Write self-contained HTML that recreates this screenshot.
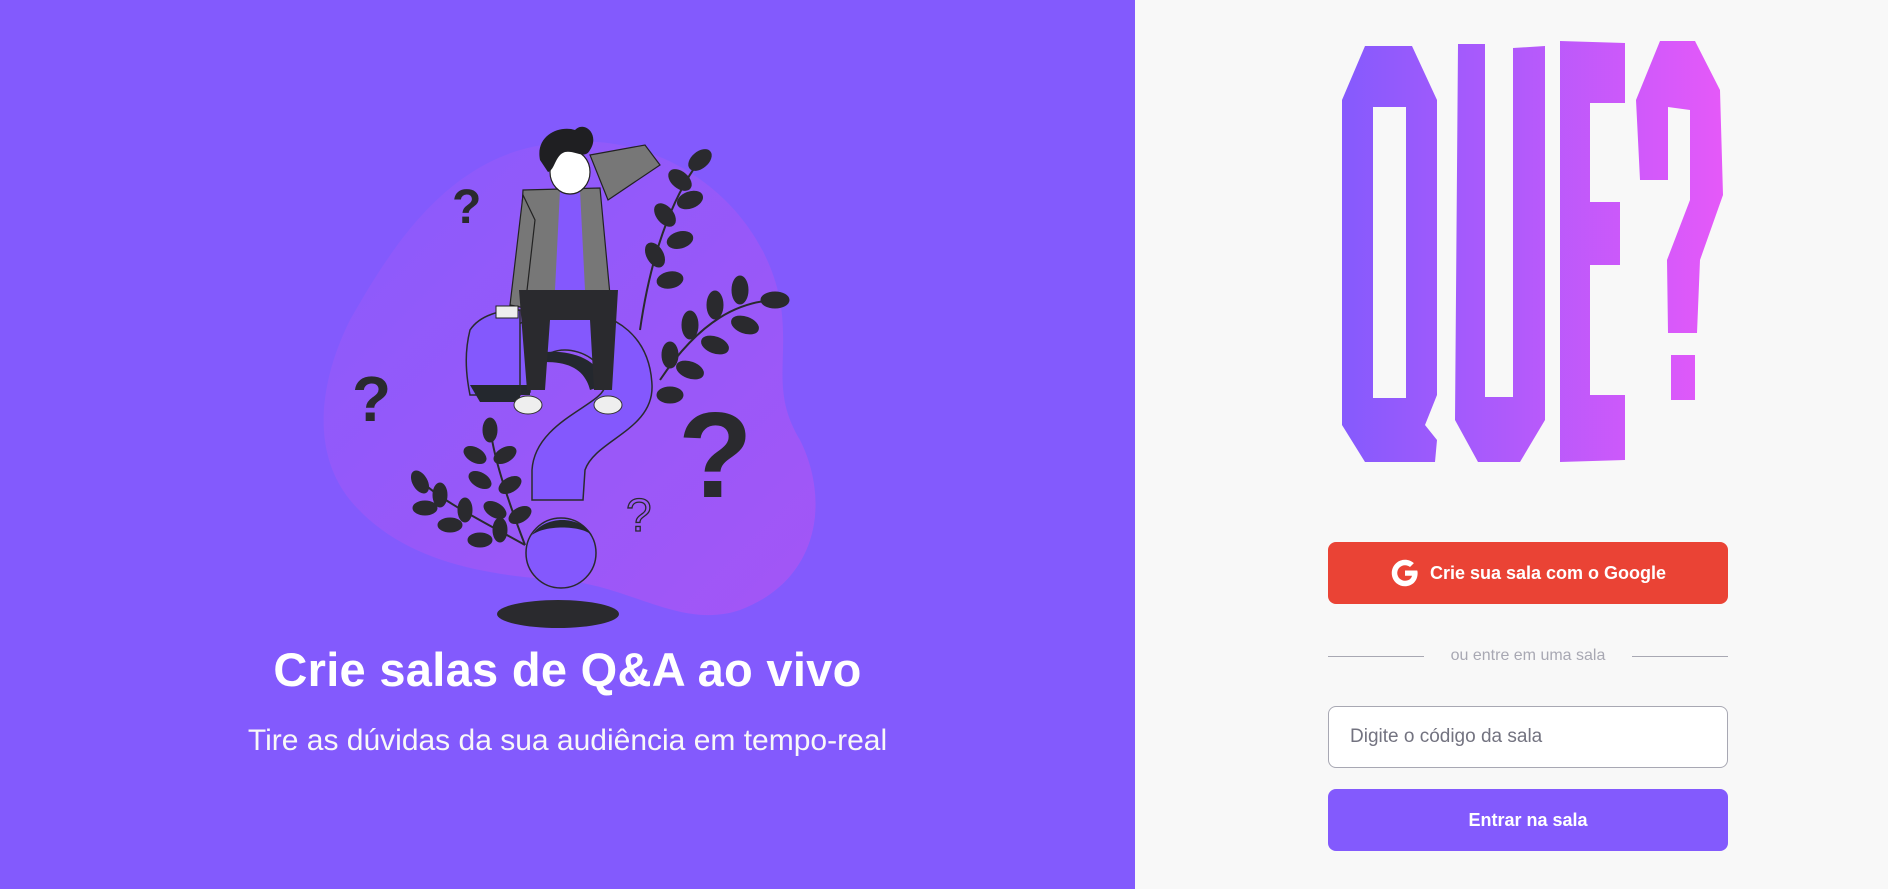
<!DOCTYPE html>
<html><head><meta charset="utf-8"><style>
html,body{margin:0;padding:0;width:1888px;height:889px;overflow:hidden;font-family:"Liberation Sans",sans-serif}
.left{position:absolute;left:0;top:0;width:1135px;height:889px;background:#835afd}
.right{position:absolute;left:1135px;top:0;width:753px;height:889px;background:#f8f8f8}
h1{position:absolute;left:0;width:1135px;top:642px;margin:0;text-align:center;color:#fff;font-size:47px;font-weight:bold;letter-spacing:0.3px}
.sub{position:absolute;left:0;width:1135px;top:752px;text-align:center;color:#f8f8f8;font-size:30px;margin-top:-28px}
.btn{position:absolute;left:1328px;width:400px;height:62px;border-radius:8px;color:#fff;font-weight:bold;font-size:18px;display:flex;align-items:center;justify-content:center}
.g{top:542px;background:#ea4335}
.e{top:789px;background:#835afd}
.div{position:absolute;left:1328px;width:400px;top:646px;height:20px;color:#a8a8b3;font-size:16px;text-align:center;line-height:20px}
.div:before,.div:after{content:"";position:absolute;top:10px;width:96px;height:1px;background:#a8a8b3}
.div:before{left:0}.div:after{right:0}
.inp{position:absolute;left:1328px;top:706px;width:398px;height:60px;border:1px solid #a8a8b3;border-radius:8px;background:#fff;color:#737380;font-size:19px;line-height:60px;padding-left:0;box-sizing:content-box}
.inp span{margin-left:21px}
</style></head><body>
<div class="left">
<svg width="1135" height="640" style="position:absolute;left:0;top:0">
<defs><linearGradient id="bl" x1="0" y1="0" x2="1" y2="1"><stop offset="0" stop-color="#8a5bfc"/><stop offset="1" stop-color="#a356f6"/></linearGradient></defs>
<path d="M560,143 C660,130 760,200 780,300 C790,360 770,390 800,440 C830,500 820,580 740,610 C680,630 630,585 560,580 C480,575 400,560 350,500 C310,450 320,380 350,320 C390,250 450,150 560,143 Z" fill="url(#bl)"/>
<!-- leaves right -->
<g fill="#2a2a2e" stroke="#2a2a2e">
<path d="M640,330 C650,260 670,200 700,160" fill="none" stroke-width="2"/>
<ellipse cx="700" cy="160" rx="13" ry="8" transform="rotate(-40 700 160)"/>
<ellipse cx="680" cy="180" rx="13" ry="8" transform="rotate(-140 680 180)"/>
<ellipse cx="690" cy="200" rx="13" ry="8" transform="rotate(-20 690 200)"/>
<ellipse cx="665" cy="215" rx="13" ry="8" transform="rotate(-130 665 215)"/>
<ellipse cx="680" cy="240" rx="13" ry="8" transform="rotate(-15 680 240)"/>
<ellipse cx="655" cy="255" rx="13" ry="8" transform="rotate(-120 655 255)"/>
<ellipse cx="670" cy="280" rx="13" ry="8" transform="rotate(-10 670 280)"/>
<path d="M660,380 C700,320 740,300 780,300" fill="none" stroke-width="2"/>
<ellipse cx="775" cy="300" rx="14" ry="8"/>
<ellipse cx="740" cy="290" rx="8" ry="14"/>
<ellipse cx="745" cy="325" rx="14" ry="8" transform="rotate(20 745 325)"/>
<ellipse cx="715" cy="305" rx="8" ry="14"/>
<ellipse cx="715" cy="345" rx="14" ry="8" transform="rotate(20 715 345)"/>
<ellipse cx="690" cy="325" rx="8" ry="14"/>
<ellipse cx="690" cy="370" rx="14" ry="8" transform="rotate(20 690 370)"/>
<ellipse cx="670" cy="355" rx="8" ry="13"/>
<ellipse cx="670" cy="395" rx="13" ry="8"/>
<!-- leaves left -->
<path d="M525,545 C500,480 490,440 490,420" fill="none" stroke-width="2"/>
<path d="M525,545 C480,520 440,500 420,480" fill="none" stroke-width="2"/>
<ellipse cx="490" cy="430" rx="7" ry="12"/>
<ellipse cx="475" cy="455" rx="12" ry="7" transform="rotate(30 475 455)"/>
<ellipse cx="505" cy="455" rx="12" ry="7" transform="rotate(-30 505 455)"/>
<ellipse cx="480" cy="480" rx="12" ry="7" transform="rotate(30 480 480)"/>
<ellipse cx="510" cy="485" rx="12" ry="7" transform="rotate(-30 510 485)"/>
<ellipse cx="495" cy="510" rx="12" ry="7" transform="rotate(30 495 510)"/>
<ellipse cx="520" cy="515" rx="12" ry="7" transform="rotate(-30 520 515)"/>
<ellipse cx="420" cy="482" rx="7" ry="12" transform="rotate(-30 420 482)"/>
<ellipse cx="425" cy="508" rx="12" ry="7"/>
<ellipse cx="440" cy="495" rx="7" ry="12"/>
<ellipse cx="450" cy="525" rx="12" ry="7"/>
<ellipse cx="465" cy="510" rx="7" ry="12"/>
<ellipse cx="480" cy="540" rx="12" ry="7"/>
<ellipse cx="500" cy="530" rx="7" ry="12"/>
</g>
<!-- big question mark -->
<path d="M496,392 C490,330 530,310 565,310 C620,310 650,340 652,385 C654,430 595,440 585,470 L583,500 L532,500 L532,470 C535,420 605,405 605,385 C605,360 580,350 565,350 C545,350 530,365 530,392 Z" fill="#8458fd" stroke="#2a2a2e" stroke-width="1.5"/>
<path d="M474,385 L530,385 L530,395 L474,395 Z" fill="#24282e"/>
<path d="M470,330 C480,315 500,310 520,310 L520,395 L470,395 C465,370 465,350 470,330 Z" fill="#8458fd" stroke="#2a2a2e" stroke-width="1.5"/>
<path d="M470,385 L520,385 L520,402 L480,402 Z" fill="#24282e"/>
<path d="M545,352 C570,350 600,358 605,385 L590,390 C585,370 570,362 545,362 Z" fill="#24282e"/>
<circle cx="561" cy="553" r="35" fill="#8458fd" stroke="#2a2a2e" stroke-width="1.5"/>
<path d="M532,535 C545,515 580,515 592,535 C580,525 545,525 532,535Z" fill="#24282e"/>
<ellipse cx="558" cy="614" rx="61" ry="14" fill="#2a2a2e"/>
<!-- man -->
<path d="M608,200 L660,165 L645,145 L590,155 Z" fill="#777" stroke="#222" stroke-width="1.2"/>
<path d="M523,190 L600,188 L610,295 L517,298 Z" fill="#777" stroke="#222" stroke-width="1.2"/>
<path d="M560,190 L580,190 L585,290 L555,290 Z" fill="#8458fd"/>
<path d="M523,195 L510,305 L525,308 L535,220 Z" fill="#777" stroke="#222" stroke-width="1.2"/>
<rect x="496" y="306" width="22" height="12" fill="#eee" stroke="#222"/>
<path d="M519,290 L618,290 L612,390 L594,390 L590,320 L550,320 L545,390 L527,390 Z" fill="#2a2a2e"/>
<ellipse cx="528" cy="405" rx="14" ry="9" fill="#eee" stroke="#333"/>
<ellipse cx="608" cy="405" rx="14" ry="9" fill="#eee" stroke="#333"/>
<ellipse cx="570" cy="172" rx="20" ry="22" fill="#fff" stroke="#222" stroke-width="1.2"/>
<path d="M540,160 C535,135 560,125 575,130 C585,120 600,135 590,150 C585,160 575,150 565,152 C555,155 555,170 548,172 Z" fill="#1f1f22"/>
</svg>
<div style="position:absolute;left:452px;top:180px;color:#2a2a2e;font:bold 48px 'Liberation Sans',sans-serif">?</div>
<div style="position:absolute;left:352px;top:362px;color:#2a2a2e;font:bold 64px 'Liberation Sans',sans-serif">?</div>
<div style="position:absolute;left:678px;top:385px;color:#2a2a2e;font:bold 122px 'Liberation Sans',sans-serif">?</div>
<div style="position:absolute;left:626px;top:488px;color:transparent;-webkit-text-stroke:1.3px #2a2a2e;font:46px 'Liberation Sans',sans-serif">?</div>
<h1>Crie salas de Q&amp;A ao vivo</h1>
<div class="sub">Tire as dúvidas da sua audiência em tempo-real</div>
</div>
<div class="right"></div>
<svg width="1888" height="889" style="position:absolute;left:0;top:0;pointer-events:none">
<defs><linearGradient id="lg" gradientUnits="userSpaceOnUse" x1="1332" y1="0" x2="1723" y2="0"><stop offset="0" stop-color="#835afd"/><stop offset="1" stop-color="#e559f9"/></linearGradient></defs>
<g fill="url(#lg)" fill-rule="evenodd">
<path d="M1365,46 L1412,46 L1437,100 L1437,395 L1425,425 L1437,440 L1435,462 L1365,462 L1342,425 L1342,100 Z M1373,107 L1406,107 L1406,398 L1373,398 Z"/>
<path d="M1458,44 L1485,44 L1485,397 L1513,397 L1513,48 L1545,46 L1545,420 L1520,462 L1478,462 L1455,420 Z"/>
<path d="M1560,41 L1625,43 L1625,103 L1590,103 L1590,202 L1620,202 L1620,265 L1590,265 L1590,395 L1625,395 L1625,460 L1560,462 Z"/>
<path d="M1660,41 L1695,41 L1720,90 L1723,195 L1700,260 L1697,333 L1668,333 L1667,260 L1690,200 L1690,110 L1668,107 L1668,180 L1640,180 L1636,100 Z"/>
<rect x="1671" y="355" width="24" height="45"/>
</g>
</svg>
<div class="btn g"><svg width="30" height="30" viewBox="0 0 24 24" style="margin-right:10px"><path fill="#fff" d="M21.8 10H12v4.2h5.6c-.6 2.6-2.8 4-5.6 4-3.4 0-6.2-2.8-6.2-6.2S8.6 5.8 12 5.8c1.5 0 2.9.5 4 1.4l3.1-3.1C17.2 2.4 14.7 1.4 12 1.4 6.1 1.4 1.4 6.1 1.4 12S6.1 22.6 12 22.6c5.3 0 10.1-3.8 10.1-10.6 0-.7-.1-1.3-.3-2z"/></svg>Crie sua sala com o Google</div>
<div class="div">ou entre em uma sala</div>
<div class="inp"><span>Digite o código da sala</span></div>
<div class="btn e">Entrar na sala</div>
</body></html>
